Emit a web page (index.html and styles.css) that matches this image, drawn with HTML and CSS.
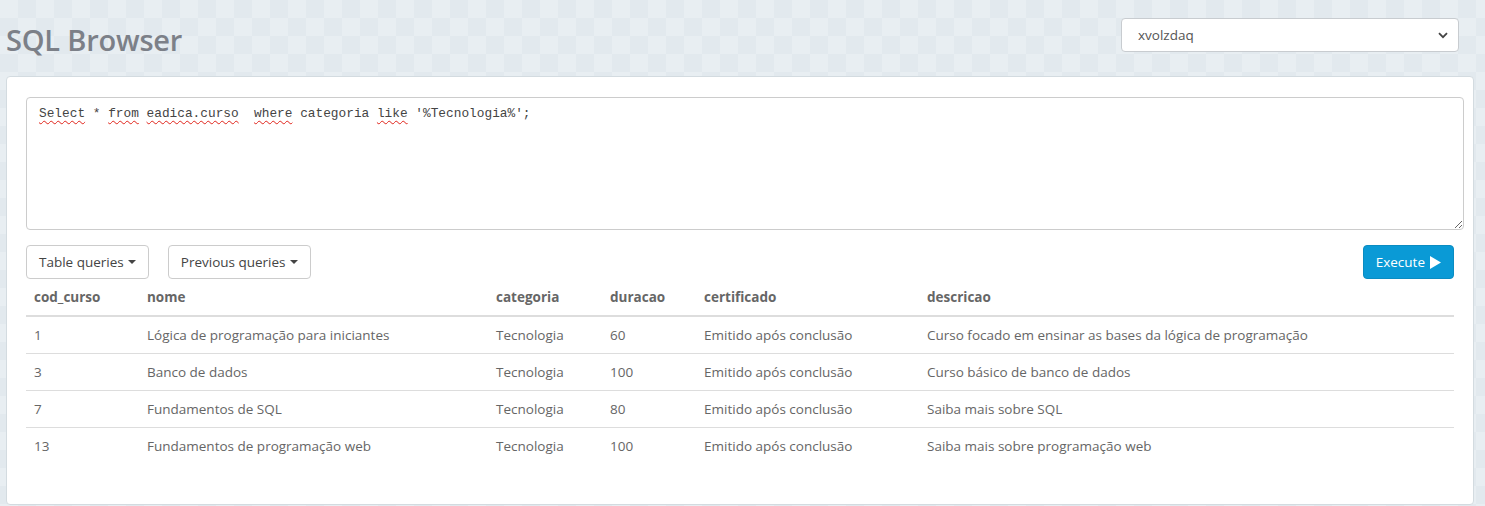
FILE: index.html
```html
<!DOCTYPE html>
<html>
<head>
<meta charset="utf-8">
<link rel="stylesheet" href="styles.css">
</head>
<body>
<header class="top">
  <h1 class="title">SQL Browser</h1>
  <div class="db-select">
    <select class="select"><option>xvolzdaq</option></select>
    <svg class="chev" width="10" height="7" viewBox="0 0 10 7"><path d="M1 1.2 L5 5.2 L9 1.2" fill="none" stroke="#444" stroke-width="1.8"/></svg>
  </div>
</header>
<main class="panel">
  <div class="query" role="textbox" contenteditable="true" spellcheck="false"><span class="misspelled">Select</span> * <span class="misspelled">from</span> <span class="misspelled">eadica.curso</span>  <span class="misspelled">where</span> categoria <span class="misspelled">like</span> '%Tecnologia%';</div>
  <div class="toolbar">
    <div class="left-btns">
      <button class="btn">Table queries <span class="caret"></span></button>
      <button class="btn">Previous queries <span class="caret"></span></button>
    </div>
    <button class="btn btn-primary">Execute <svg class="play" width="11" height="13" viewBox="0 0 11 13"><path d="M0 0 L11 6.5 L0 13 Z" fill="#fff"/></svg></button>
  </div>
  <table class="results">
    <thead>
      <tr><th class="c1">cod_curso</th><th class="c2">nome</th><th class="c3">categoria</th><th class="c4">duracao</th><th class="c5">certificado</th><th class="c6">descricao</th></tr>
    </thead>
    <tbody>
      <tr><td>1</td><td>Lógica de programação para iniciantes</td><td>Tecnologia</td><td>60</td><td>Emitido após conclusão</td><td>Curso focado em ensinar as bases da lógica de programação</td></tr>
      <tr><td>3</td><td>Banco de dados</td><td>Tecnologia</td><td>100</td><td>Emitido após conclusão</td><td>Curso básico de banco de dados</td></tr>
      <tr><td>7</td><td>Fundamentos de SQL</td><td>Tecnologia</td><td>80</td><td>Emitido após conclusão</td><td>Saiba mais sobre SQL</td></tr>
      <tr><td>13</td><td>Fundamentos de programação web</td><td>Tecnologia</td><td>100</td><td>Emitido após conclusão</td><td>Saiba mais sobre programação web</td></tr>
    </tbody>
  </table>
</main>
</body>
</html>
```

FILE: styles.css
```css
* { box-sizing: border-box; }
html, body { height: 100%; }
body {
  margin: 0;
  padding: 0 11px 0 6px;
  font-family: "Open Sans", "Noto Sans", sans-serif;
  font-size: 13.5px;
  color: #666;
  background-color: #e5ecf0;
  background-image:
    repeating-conic-gradient(#e2e9ee 0 25%, #e8eef2 0 50%);
  background-size: 36px 36px;
  overflow: hidden;
}
.top {
  display: flex;
  justify-content: space-between;
  align-items: flex-start;
  height: 76px;
}
.title {
  margin: 20px 0 0 0;
  font-size: 29px;
  font-weight: 600;
  color: #7c8088;
  letter-spacing: -0.2px;
  line-height: 40px;
}
.db-select {
  position: relative;
  margin: 18px 15px 0 0;
  width: 338px;
  height: 34px;
}
.select {
  appearance: none;
  -webkit-appearance: none;
  width: 100%;
  height: 34px;
  border: 1px solid #c8ccd0;
  border-radius: 4px;
  background: #fff;
  font-family: "Open Sans", "Noto Sans", sans-serif;
  font-size: 13.5px;
  color: #555;
  padding: 0 12px 0 16px;
}
.chev { position: absolute; right: 11px; top: 14px; }
.panel {
  background: #fff;
  border: 1px solid #d3dbe0;
  border-radius: 4px;
  padding: 20px 10px 40px 19px;
  display: flex;
  flex-direction: column;
}
.query {
  display: block;
  width: 1438px;
  height: 133px;
  border: 1px solid #ccc;
  border-radius: 4px;
  padding: 6px 12px;
  font-family: "Liberation Mono", monospace;
  font-size: 12.8px;
  line-height: 20px;
  color: #444;
  white-space: pre;
  resize: vertical;
  overflow: auto;
  outline: none;
}
.misspelled {
  text-decoration: underline wavy #e0241b;
  text-decoration-thickness: 1px;
  text-underline-offset: 3px;
}
.toolbar {
  display: flex;
  justify-content: space-between;
  align-items: center;
  margin-top: 15px;
  width: 1428px;
}
.left-btns { display: flex; gap: 19px; }
.btn {
  height: 34px;
  padding: 0 12px;
  border: 1px solid #ccc;
  border-radius: 4px;
  background: #fff;
  color: #444;
  font-family: "Open Sans", "Noto Sans", sans-serif;
  font-size: 13.5px;
  display: inline-flex;
  align-items: center;
  gap: 4px;
}
.caret {
  display: inline-block;
  width: 0; height: 0;
  border-left: 4px solid transparent;
  border-right: 4px solid transparent;
  border-top: 4px solid #444;
}
.btn-primary {
  background: #0a9ad6;
  border-color: #0a8cc2;
  color: #fff;
  padding: 0 12px;
  gap: 5px;
}
.results {
  width: 1428px;
  border-collapse: collapse;
}
.results th, .results td {
  text-align: left;
  padding: 8px;
  line-height: 20px;
}
.results th {
  font-weight: 700;
  color: #666;
  border-bottom: 2px solid #ddd;
}
.results td {
  border-top: 1px solid #ddd;
}
.results tbody tr:first-child td { border-top: none; }
.c1 { width: 113px; }
.c2 { width: 349px; }
.c3 { width: 114px; }
.c4 { width: 94px; }
.c5 { width: 223px; }
```
